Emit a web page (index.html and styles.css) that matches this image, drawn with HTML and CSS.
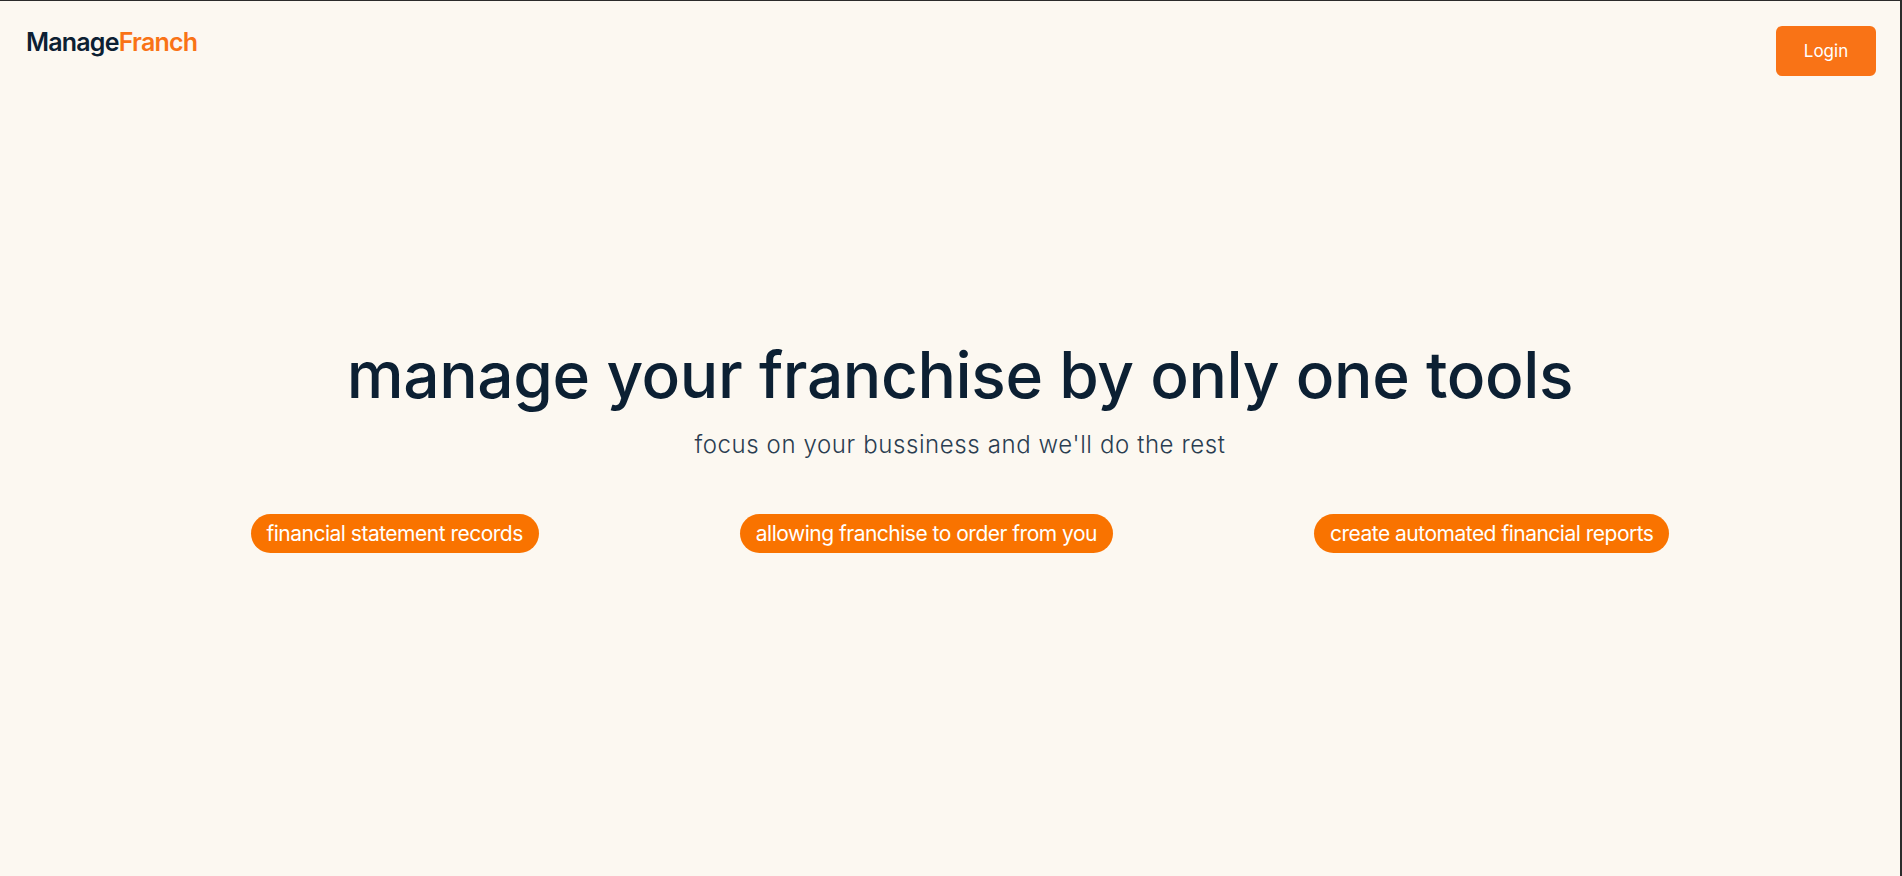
FILE: index.html
```html
<!DOCTYPE html>
<html lang="en">
<head>
<meta charset="utf-8">
<title>ManageFranch</title>
<link rel="stylesheet" href="styles.css">
</head>
<body>
<div class="page">
  <header class="topbar">
    <div class="logo"><span class="logo-dark">Manage</span><span class="logo-accent">Franch</span></div>
    <button class="login-btn">Login</button>
  </header>
  <main class="hero">
    <h1 class="hero-title">manage your franchise by only one tools</h1>
    <p class="hero-sub">focus on your bussiness and we'll do the rest</p>
    <div class="features">
      <div class="feature"><span class="pill">financial statement records</span></div>
      <div class="feature"><span class="pill">allowing franchise to order from you</span></div>
      <div class="feature"><span class="pill">create automated financial reports</span></div>
    </div>
  </main>
</div>
</body>
</html>
```

FILE: styles.css
```css
* { box-sizing: border-box; }
html, body { margin: 0; padding: 0; }
body {
  background: #fcf8f1;
  font-family: Inter, "Noto Sans", sans-serif;
  color: #0c2033;
}
.page {
  height: 876px;
  border-top: 1px solid #2b2b2b;
  border-right: 2px solid #2b2b2b;
  background: #fcf8f1;
  overflow: hidden;
}
.topbar {
  display: flex;
  justify-content: space-between;
  align-items: flex-start;
  padding: 25px 24px 0 26px;
}
.logo {
  margin-top: 1px;
  font-size: 25px;
  line-height: 1.2;
  font-weight: 600;
  letter-spacing: -0.8px;
}
.logo-dark { color: #0c2033; }
.logo-accent { color: #f97316; }
.login-btn {
  width: 100px;
  height: 50px;
  border: none;
  border-radius: 6px;
  background: #f97316;
  color: #fff;
  font-family: Inter, "Noto Sans", sans-serif;
  font-size: 17px;
  font-weight: 400;
}
.hero {
  width: 1920px;
  padding-top: 261px;
  display: flex;
  flex-direction: column;
  align-items: center;
}
.hero-title {
  margin: 0;
  font-size: 64px;
  line-height: 1.2;
  font-weight: 500;
  letter-spacing: -0.4px;
  color: #0c2033;
}
.hero-sub {
  margin: 16px 0 0;
  font-size: 24px;
  font-weight: 300;
  color: #2a3d50;
  letter-spacing: 0.6px;
}
.features {
  margin-top: 55px;
  width: 1620px;
  display: flex;
}
.feature {
  flex: 1 1 auto;
  display: flex;
  justify-content: center;
}
.pill {
  height: 39px;
  display: inline-flex;
  align-items: center;
  padding: 0 16px;
  border-radius: 20px;
  background: #f97300;
  color: #fff;
  font-size: 21px;
  letter-spacing: -0.5px;
  white-space: nowrap;
}
```
